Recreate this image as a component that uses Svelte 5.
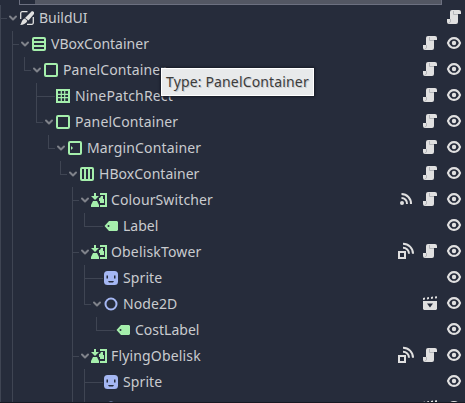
<script>
  const rows = [
    { d: 0, name: 'BuildUI', icon: 'build', open: true, guides: [0], acts: ['script'] },
    { d: 1, name: 'VBoxContainer', icon: 'vbox', open: true, guides: [0, 1], acts: ['script', 'eye'] },
    { d: 2, name: 'PanelContainer', track: 0.14, icon: 'panel', open: true, last: true, guides: [0, 1], acts: ['script', 'eye'] },
    { d: 3, name: 'NinePatchRect', track: 0.15, icon: 'nine', guides: [0, 1, 3], acts: ['script', 'eye'] },
    { d: 3, name: 'PanelContainer', track: 0.14, icon: 'panel', open: true, last: true, guides: [0, 1], acts: ['script', 'eye'] },
    { d: 4, name: 'MarginContainer', track: 0.16, icon: 'margin', open: true, last: true, guides: [0, 1], acts: ['script', 'eye'] },
    { d: 5, name: 'HBoxContainer', track: 0.04, icon: 'hbox', open: true, last: true, guides: [0, 1], acts: ['script', 'eye'] },
    { d: 6, name: 'ColourSwitcher', track: 0.12, icon: 'button', open: true, guides: [0, 1, 6], acts: ['signal', 'script', 'eye'] },
    { d: 7, name: 'Label', icon: 'label', last: true, guides: [0, 1, 6], acts: ['eye'] },
    { d: 6, name: 'ObeliskTower', track: 0.16, icon: 'button', open: true, guides: [0, 1, 6], acts: ['group', 'script', 'eye'] },
    { d: 7, name: 'Sprite', track: 0.1, icon: 'sprite', guides: [0, 1, 6, 7], acts: ['eye'] },
    { d: 7, name: 'Node2D', track: 0.1, icon: 'node', open: true, last: true, guides: [0, 1, 6], acts: ['clap', 'eye'] },
    { d: 8, name: 'CostLabel', icon: 'label', last: true, guides: [0, 1, 6], acts: ['eye'] },
    { d: 6, name: 'FlyingObelisk', track: 0.16, icon: 'button', open: true, guides: [0, 1, 6], acts: ['group', 'script', 'eye'] },
    { d: 7, name: 'Sprite', track: 0.1, icon: 'sprite', guides: [0, 1, 6, 7], acts: ['eye'] },
    { d: 7, name: 'Node2D', track: 0.1, icon: 'node', open: true, last: true, guides: [0, 1, 6], acts: ['clap', 'eye'] }
  ];
</script>

{#snippet nodeIcon(k)}
  <svg class="icon" viewBox="0 0 16 16" width="16" height="16">
    {#if k === 'build'}
      <path d="M8.500 1.700H3.200a1.500 1.500 0 0 0-1.500 1.500V9M14.300 7v5.800a1.500 1.500 0 0 1-1.500 1.500H8" fill="none" stroke="#e0e0e0" stroke-width="1.300" />
      <path d="M13 1l2 1v2L9.500 10.500 6 8z" fill="#e0e0e0" />
      <path d="M5.800 8.500l2.600 2.300C7.500 13.500 4.500 15 1 15c1.800-1.200 1.500-5.800 4.800-6.500z" fill="#e0e0e0" />
    {:else if k === 'vbox'}
      <rect x="2" y="2" width="12" height="12" rx="1" class="g" />
      <path d="M2 6h12M2 10h12" class="g" />
    {:else if k === 'hbox'}
      <rect x="2" y="2" width="12" height="12" rx="1" class="g" />
      <path d="M6 2v12M10 2v12" class="g" />
    {:else if k === 'panel' || k === 'margin'}
      <rect x="2" y="2" width="12" height="12" rx="1" class="g" />
      {#if k === 'margin'}<path d="M4 6l2 2-2 2z" fill="#a5efac" />{/if}
    {:else if k === 'nine'}
      <path d="M2 2h12v12H2z" class="g" />
      <path d="M6.300 2v12M9.700 2v12M2 6.300h12M2 9.700h12" class="g thin" />
    {:else if k === 'button'}
      <path d="M3 1h2v3h3L4 8 0 4h3zM2 9h4l2 4v2H0v-2z" fill="#a5efac" />
      <path d="M9 2h6v12H9" class="g" />
      <path d="M8 6h1l1-2h2v3h1v4H9V9H8z" fill="#a5efac" />
    {:else if k === 'label'}
      <path fill-rule="evenodd" d="M6 3L1.500 8 6 13h8l1-1V4l-1-1zM5.500 7a1 1 0 1 1 0 2 1 1 0 0 1 0-2z" fill="#a5efac" />
    {:else if k === 'sprite'}
      <rect x="1" y="1" width="14" height="14" rx="3.500" fill="#a5b7f3" />
      <path d="M3.500 5.500h1.500v3H3.500zM11 5.500h1.500v3H11zM5 11h6l-1 1.500H6z" fill="#262c3b" />
    {:else if k === 'node'}
      <circle cx="8" cy="8" r="5.500" fill="none" stroke="#a5b7f3" stroke-width="2" />
    {/if}
  </svg>
{/snippet}

{#snippet actIcon(k)}
  <svg class="act" viewBox="0 0 16 16" width="16" height="16">
    {#if k === 'script'}
      <path d="M6 1a2 2 0 0 0-2 2v7H1v3a2 2 0 0 0 2 2h7a2 2 0 0 0 2-2V5h3V3a2 2 0 0 0-2-2z" fill="#e0e0e0" />
      <path d="M7.500 2v3.500H12M4.500 10v3L3 14" fill="none" stroke="#b4b6ba" />
    {:else if k === 'eye'}
      <path d="M2 8c1-2.900 3.200-4.900 6-4.900S13 5.100 14 8c-1 2.900-3.200 4.900-6 4.900S3 10.900 2 8z" fill="none" stroke="#e0e0e0" stroke-width="2.200" />
      <circle cx="8" cy="8" r="2.200" fill="#e0e0e0" />
    {:else if k === 'signal'}
      <circle cx="4" cy="12" r="2" fill="#e0e0e0" />
      <path d="M3.500 7a5.500 5.500 0 0 1 5.500 6M3.500 3a9.500 9.500 0 0 1 9.500 10" fill="none" stroke="#e0e0e0" stroke-width="2" />
    {:else if k === 'group'}
      <rect x="1" y="9" width="6" height="6" fill="none" stroke="#e0e0e0" stroke-width="2" />
      <path d="M5 4.700a6 6 0 0 1 6 6M5 .7a10 10 0 0 1 10 10" fill="none" stroke="#e0e0e0" stroke-width="2" />
    {:else if k === 'clap'}
      <path d="M1 3l2-.5v2L1 5zM5 2.500L7 2v2l-2 .5zM9 2l2-.4v2L9 4zM13 1.600l2-.4v2l-2 .4z" fill="#e0e0e0" />
      <path fill-rule="evenodd" d="M1 6h14v8l-1 1H2l-1-1zM5 8.500l3 4 3-4z" fill="#e0e0e0" />
    {/if}
  </svg>
{/snippet}

<main>
  <div class="search"></div>
  <div class="tree">
    {#each rows as r}
      <div class="row" style="padding-left: {r.d * 12}px">
        {#each r.guides as g}<i class="guide" style="left: {g * 12}px"></i>{/each}
        {#if r.last}<i class="guide half" style="left: {r.d * 12}px"></i>{/if}
        <i class="branch" class:long={!r.open}></i>
        <span class="arrow">
          {#if r.open}<svg viewBox="0 0 10 8" width="10" height="8"><path d="M2 2.500l3 3 3-3" /></svg>{/if}
        </span>
        {@render nodeIcon(r.icon)}
        <span class="name" style="letter-spacing: {r.track ?? 0}px">{r.name}</span>
        <span class="acts">{#each r.acts as a}{@render actIcon(a)}{/each}</span>
      </div>
    {/each}
  </div>
  <div class="edge"></div>
  <div class="tip">Type: PanelContainer</div>
</main>

<style>
  main {
    position: relative;
    display: flex;
    flex-direction: column;
    width: 465px;
    height: 403px;
    overflow: hidden;
    background: #262c3b;
    color: #c9cbcf;
    font: 14px/26px "Noto Sans", sans-serif;
  }
  .search {
    flex: none;
    box-sizing: border-box;
    width: 423px;
    height: 5px;
    margin-left: 19px;
    border: 1px solid #6c7080;
    border-top: 0;
    background: linear-gradient(90deg, #262c3b 15px, #535763 15px);
  }
  .tree { flex: 1; min-height: 0; overflow: hidden; }
  .row { position: relative; display: flex; align-items: center; height: 26px; }
  .guide { position: absolute; top: 0; width: 1px; height: 26px; background: #3f4553; }
  .half { height: 13px; }
  .branch { flex: none; width: 7px; height: 1px; background: #3f4553; }
  .branch.long { width: 19px; margin-right: -12px; }
  .arrow { flex: none; display: flex; width: 12px; padding-left: 1px; box-sizing: border-box; }
  .arrow path { fill: none; stroke: #7f828a; stroke-width: 2; stroke-linecap: round; stroke-linejoin: round; }
  svg { display: block; flex: none; overflow: visible; }
  .g { fill: none; stroke: #a5efac; stroke-width: 2; }
  .thin { stroke-width: 1.2; }
  .name { margin-left: 4px; white-space: pre; }
  .acts { display: flex; gap: 8px; margin-left: auto; margin-right: 3px; padding-bottom: 2px; }
  .edge { flex: none; height: 1px; background: #171923; }
  .tip {
    position: absolute;
    left: 161px;
    top: 68px;
    box-sizing: border-box;
    width: 153px;
    height: 28px;
    padding-left: 4px;
    border: 1px solid #fff;
    background: #e8eaeb;
    color: #3c3c3c;
    letter-spacing: 0.15px;
    box-shadow: 0 0 2px 1px #171b26;
    text-shadow: 1px 1px 0 #c9cacb;
    white-space: pre;
  }
</style>
